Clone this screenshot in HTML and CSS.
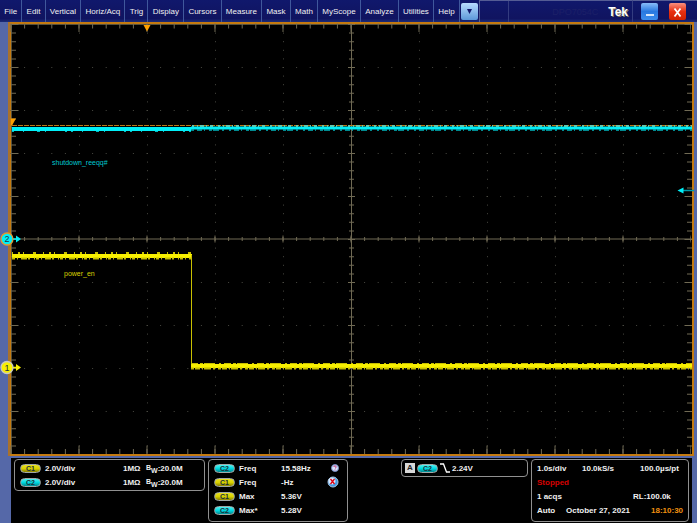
FILE: index.html
```html
<!DOCTYPE html>
<html lang="en">
<head>
    <meta charset="UTF-8">
    <meta name="viewport" content="width=device-width, initial-scale=1.0">
    <title>Tek Oscilloscope</title>
    <link rel="stylesheet" href="styles.css">
</head>
<body>
    <header class="menubar">
        <nav class="menu">
            <button>File</button>
            <button>Edit</button>
            <button>Vertical</button>
            <button>Horiz/Acq</button>
            <button>Trig</button>
            <button>Display</button>
            <button>Cursors</button>
            <button>Measure</button>
            <button>Mask</button>
            <button>Math</button>
            <button>MyScope</button>
            <button>Analyze</button>
            <button>Utilities</button>
            <button>Help</button>
        </nav>
        <button class="win-btn more" aria-label="More menus">
            <svg viewBox="0 0 17 16"><path d="M6 6h5l-2.5 5z" fill="#10186c"/></svg>
        </button>
        <div class="title">
            <span class="slot"></span>
            <span class="model">DPO7054C</span>
            <span class="brand">Tek</span>
        </div>
        <div class="window-controls">
            <button class="win-btn minimize" aria-label="Minimize">
                <svg viewBox="0 0 17 16"><path d="M5 11h8" stroke="#fff" stroke-width="1.6"/></svg>
            </button>
            <button class="win-btn close" aria-label="Close">
                <svg viewBox="0 0 17 16"><path d="M5.5 4.5l6 8M11.500 4.500l-6 8" stroke="#fff" stroke-width="1.8"/></svg>
            </button>
        </div>
    </header>

    <main>
        <svg class="scope" viewBox="0 22 697 436" role="img" aria-label="Waveforms">
            <!-- frame -->
            <rect x="8" y="22" width="686" height="434" fill="#c47a10"/>
            <rect x="8" y="22" width="2" height="434" fill="#a8712c"/>
            <rect x="11" y="24" width="681" height="430" fill="#000"/>
            <path d="M11.500 24v430M11 24.500h681" stroke="#55503c"/>

            <!-- graticule dots -->
            <g class="dots-h">
                <path d="M10.500 67.500H691M10.500 110.500H691M10.500 153.500H691M10.500 196.500H691M10.500 282.500H691M10.500 325.500H691M10.500 368.500H691M10.500 411.500H691"/>
            </g>
            <g class="dots-v">
                <path d="M79.500 24V454M147.500 24V454M215.500 24V454M283.500 24V454M419.500 24V454M487.500 24V454M555.500 24V454M623.500 24V454"/>
            </g>

            <!-- edge and centre ticks -->
            <g class="ticks">
                <path d="M10.500 26H691M10.500 451.500H691" stroke-width="5" stroke-dasharray="1 12.600"/>
                <path d="M10.500 28H691M10.500 449.500H691" stroke-width="8" stroke-dasharray="1 67"/>
                <path d="M13.500 24V454M689.500 24V454" stroke-width="5" stroke-dasharray="1 7.600"/>
                <path d="M15 24V454M688 24V454" stroke-width="7" stroke-dasharray="1 42"/>
                <path d="M10.500 239H691" stroke-width="4" stroke-dasharray="1 12.600"/>
                <path d="M10.500 239H691" stroke-width="7" stroke-dasharray="1 67"/>
                <path d="M351.500 24V454" stroke-width="5" stroke-dasharray="1 7.600"/>
                <path d="M351.500 24V454" stroke-width="7" stroke-dasharray="1 42"/>
                <path d="M11 239H692M351.500 24V454" stroke-width="1"/>
            </g>

            <!-- channel 2 -->
            <path d="M12 129H191.500" stroke="#00f0f8" stroke-width="4"/>
            <path d="M191 128H692" stroke="#00f0f8" stroke-width="3"/>
            <path d="M12 131.500H191" stroke="#00b8c0" stroke-dasharray="2 9 1 13 3 5 1 19 2 4"/>
            <path d="M192 130H692" stroke="#00b8c0" stroke-width="1.600" stroke-dasharray="2 3 5 2 1 4 3 1 6 3 2 5"/>
            <path d="M12 125.500H692" stroke="#b87818" stroke-dasharray="5 1"/>
            <path d="M192 126H692" stroke="#60c8b0" stroke-width="2" stroke-dasharray="2 3 1 2 4 2 1 3 3 5"/>

            <!-- channel 1 -->
            <path d="M12 256H192" stroke="#f8f000" stroke-width="4"/>
            <path d="M12 258.500H192" stroke="#c8c000" stroke-width="2" stroke-dasharray="3 2 1 3 6 1 2 4 1 1"/>
            <path d="M12 253H192" stroke="#c8c000" stroke-width="2" stroke-dasharray="1 5 2 3 1 9 3 7"/>
            <path d="M191.500 255V368" stroke="#c8c000"/>
            <path d="M191 366H692" stroke="#f8f000" stroke-width="4"/>
            <path d="M191 368.500H692" stroke="#c8c000" stroke-width="2" stroke-dasharray="3 1 5 2 1 1 7 2 2 3"/>
            <path d="M191 363.500H692" stroke="#c8c000" stroke-dasharray="7 2 3 1 11 4 2 3"/>

            <text class="label cyan" x="52" y="165">shutdown_reeqq#</text>
            <text class="label yellow" x="64" y="276">power_en</text>

            <!-- trigger markers -->
            <path d="M143.500 25h7l-3.500 6.500z" fill="#ffa000"/>
            <path d="M11 118.500h5l-4 7h-1z" fill="#ffa000"/>
            <path d="M683 190.500h11" stroke="#009ca8" stroke-width="1.500"/>
            <path d="M677.500 190.500l6-3v6z" fill="#00f0f8"/>

            <!-- channel markers -->
            <path d="M12 239h6" stroke="#00f0f8" stroke-width="1.500"/>
            <path d="M16 235.500l5 3.500-5 3.500z" fill="#00f0f8"/>
            <circle cx="7" cy="239" r="6" fill="#00f0f8" stroke="#e09830" stroke-width="1.300"/>
            <text class="marker" x="7" y="242">2</text>
            <path d="M12 367.500h6" stroke="#f8f000" stroke-width="1.500"/>
            <path d="M16 364l5 3.500-5 3.500z" fill="#f8f000"/>
            <circle cx="7" cy="367.500" r="6" fill="#f8f000" stroke="#c8c8c0" stroke-width="1.300"/>
            <text class="marker" x="7" y="371">1</text>
        </svg>
    </main>

    <footer class="readouts">
        <section class="box channels">
            <div class="row">
                <span class="badge c1">C1</span><span>2.0V/div</span><span>1MΩ</span><span class="bw"><sup>B</sup><sub>W</sub>:20.0M</span>
            </div>
            <div class="row">
                <span class="badge c2">C2</span><span>2.0V/div</span><span>1MΩ</span><span class="bw"><sup>B</sup><sub>W</sub>:20.0M</span>
            </div>
        </section>

        <table class="box measurements">
            <tbody>
                <tr class="row">
                    <td><span class="badge c2">C2</span></td><td>Freq</td><td>15.58Hz</td>
                    <td>
                        <svg class="status" viewBox="0 0 12 12">
                            <circle cx="6" cy="6" r="3.500" fill="#d8e4ff" stroke="#7088c0"/>
                            <path d="M4.800 5q0-1.200 1.200-1.200t1.200 1.200q0 .8-1.200 1.400M6 7.500v.9" fill="none" stroke="#c02060" stroke-width=".8"/>
                        </svg>
                    </td>
                </tr>
                <tr class="row">
                    <td><span class="badge c1">C1</span></td><td>Freq</td><td>-Hz</td>
                    <td class="error">
                        <svg class="status" viewBox="0 0 12 12">
                            <circle cx="6" cy="6" r="5" fill="#4098e0" stroke="#a8c8e8"/>
                            <circle cx="5" cy="5" r="3.500" fill="#d8e8ff"/>
                            <path d="M3.500 3l4 5M7.500 3l-4 5" stroke="#e00010" stroke-width="1.300"/>
                        </svg>
                    </td>
                </tr>
                <tr class="row">
                    <td><span class="badge c1">C1</span></td><td>Max</td><td>5.36V</td><td></td>
                </tr>
                <tr class="row">
                    <td><span class="badge c2">C2</span></td><td>Max*</td><td>5.28V</td><td></td>
                </tr>
            </tbody>
        </table>

        <section class="box trigger">
            <div class="row">
                <span class="source">A</span>
                <span class="badge c2">C2</span>
                <svg class="slope" viewBox="0 0 10 10"><path d="M0 1h3.500l3 8H10" fill="none" stroke="#fff" stroke-width="1.300"/></svg>
                <span>2.24V</span>
            </div>
        </section>

        <section class="box timebase">
            <div class="row rates"><span>1.0s/div</span><span>10.0kS/s</span><span>100.0µs/pt</span></div>
            <div class="row stopped">Stopped</div>
            <div class="row acqs"><span>1 acqs</span><span>RL:100.0k</span></div>
            <div class="row clock"><span>Auto</span><span>October 27, 2021</span><time>18:10:30</time></div>
        </section>
    </footer>
</body>
</html>
```

FILE: styles.css
```css
* {
    box-sizing: border-box;
}
body {
    margin: 0;
    min-height: 100vh;
    display: flex;
    flex-direction: column;
    background: #5568a8;
    color: #f0f0f0;
    font-family: "Liberation Sans", Arial, sans-serif;
    font-size: 8px;
}
button {
    font: inherit;
    color: inherit;
    border: none;
    background: none;
    padding: 0;
    cursor: pointer;
}
.menubar {
    display: flex;
    align-items: center;
    height: 22px;
    background: linear-gradient(#10186c, #101460 85%, #1c2c78);
}
.menu {
    display: flex;
    flex: 0 0 66%;
    height: 100%;
}
.menu button {
    flex: 1 0 auto;
    padding: 0 4px;
    border-right: 1px solid #40589c;
}
.win-btn {
    width: 17px;
    height: 17px;
    border-radius: 2px;
}
.win-btn svg {
    display: block;
    width: 100%;
}
.more {
    margin: 0 1px;
    background: linear-gradient(#b8dcff, #5c98d8);
}
.title {
    flex: 1;
    display: flex;
    align-items: center;
    height: 100%;
    border-left: 1px solid #545c94;
    border-top: 1px solid #545c94;
}
.slot {
    width: 29px;
    height: 100%;
    border-right: 1px solid #343c80;
}
.model {
    margin-left: auto;
    font-size: 9px;
    color: #1c2068;
}
.brand {
    margin: 0 4px 0 10px;
    font-size: 12px;
    font-weight: bold;
    color: #fff;
    text-shadow: 1px 1px #807860;
}
.window-controls {
    display: flex;
    align-items: center;
    gap: 11px;
    height: 100%;
    padding: 0 11px 0 8px;
    border-left: 1px solid #343c80;
    border-top: 1px solid #545c94;
}
.minimize {
    background: linear-gradient(#88bcf8, #2878e0 50%, #3c8cec);
}
.close {
    background: linear-gradient(#f89080, #e83010 50%, #d02000);
}
.scope {
    display: block;
    width: 100%;
}
.dots-h, .dots-v {
    stroke: #484840;
}
.dots-h {
    stroke-dasharray: 1 12.6;
}
.dots-v {
    stroke-dasharray: 1 7.6;
}
.ticks {
    stroke: #706a54;
}
.label {
    font-size: 7px;
}
.cyan {
    fill: #00c8d0;
}
.yellow {
    fill: #d8d000;
}
.marker {
    font-size: 9px;
    text-anchor: middle;
    fill: #203040;
}
.readouts {
    flex: 1;
    display: grid;
    grid-template-columns: minmax(0, 191fr) minmax(0, 140fr) minmax(0, 47fr) minmax(0, 127fr) minmax(0, 158fr);
    align-items: start;
    gap: 3px;
    margin: 0 5px 0 11px;
    padding: 1px 3px;
    background: #000;
    font-weight: bold;
}
.box {
    border: 1px solid #909090;
    border-radius: 4px;
    padding: 1px 5px;
    white-space: nowrap;
}
.row {
    display: grid;
    align-items: center;
    height: 14px;
}
.badge {
    display: block;
    width: 21px;
    height: 9px;
    border: 1px solid #a0a8a8;
    border-radius: 5px;
    font-size: 7px;
    line-height: 8px;
    text-align: center;
    color: #183038;
}
.c1 {
    background: linear-gradient(#e8e020, #d8d000 50%, #888000);
}
.c2 {
    background: linear-gradient(#50f0f0, #00d8e0 50%, #008890);
}
.channels .row {
    grid-template-columns: 25px 78px 23px auto;
}
.bw sup, .bw sub {
    font-size: 7px;
    line-height: 0;
}
.bw sup {
    vertical-align: 1px;
}
.bw sub {
    vertical-align: -2px;
}
.measurements {
    display: block;
    padding-bottom: 4px;
}
.measurements tbody {
    display: block;
}
.measurements .row {
    grid-template-columns: 25px 42px 46px auto;
}
.measurements td {
    padding: 0;
}
.status {
    display: block;
    width: 12px;
    height: 12px;
    margin-left: 2px;
}
.error .status {
    margin-left: 0;
}
.trigger {
    grid-column: 4;
    padding: 1px 3px;
}
.trigger .row {
    display: flex;
    gap: 2px;
}
.source {
    width: 10px;
    background: #d8d8d8;
    color: #202020;
    text-align: center;
    line-height: 10px;
}
.slope {
    width: 10px;
    height: 10px;
}
.timebase {
    padding-bottom: 4px;
}
.rates {
    grid-template-columns: 45px 58px auto;
}
.stopped {
    color: #d80000;
}
.acqs {
    grid-template-columns: 96px auto;
}
.clock {
    grid-template-columns: 29px 85px auto;
}
.clock time {
    color: #f09010;
}
```
